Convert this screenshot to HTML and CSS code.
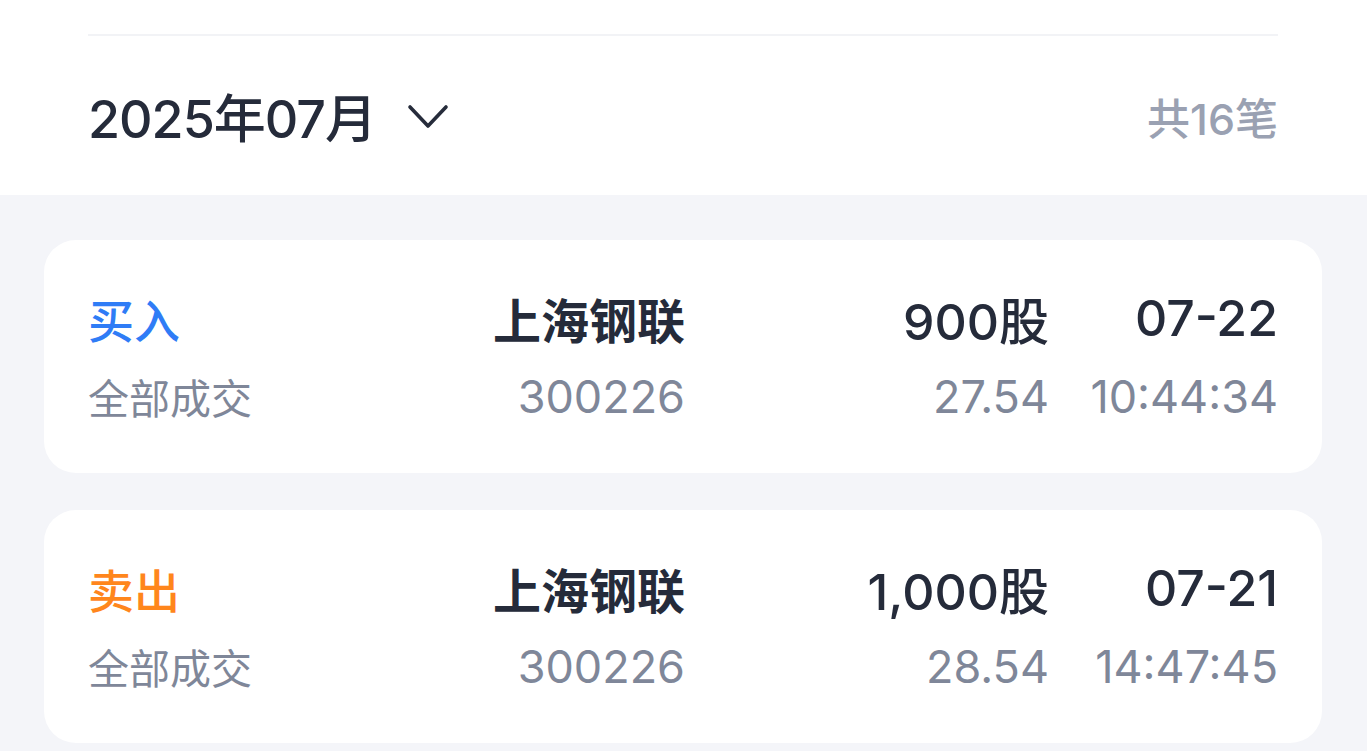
FILE: index.html
```html
<!DOCTYPE html>
<html>
<head>
    <meta charset="utf-8">
    <link rel="stylesheet" href="styles.css">
</head>
<body>
    <div class="header">
        <div class="divider"></div>
        <div class="monthBar">
            <div class="monthPicker">
                <span class="monthText">2025年07月</span>
                <svg class="chevron" width="44" height="28" viewBox="0 0 44 28">
                    <path d="M4 5 L22 24 L40 5" fill="none" stroke="#262c3b" stroke-width="3.6" stroke-linecap="round" stroke-linejoin="round"/>
                </svg>
            </div>
            <span class="countText">共16笔</span>
        </div>
    </div>

    <div class="list">
        <!-- each card is one order -->
        <div class="orderCard">
            <div class="cell typeBuy">买入</div>
            <div class="cell name">上海钢联</div>
            <div class="cell main">900股</div>
            <div class="cell main">07-22</div>
            <div class="cell sub left">全部成交</div>
            <div class="cell sub">300226</div>
            <div class="cell sub">27.54</div>
            <div class="cell sub">10:44:34</div>
        </div>
        <div class="orderCard">
            <div class="cell typeSell">卖出</div>
            <div class="cell name">上海钢联</div>
            <div class="cell main">1,000股</div>
            <div class="cell main">07-21</div>
            <div class="cell sub left">全部成交</div>
            <div class="cell sub">300226</div>
            <div class="cell sub">28.54</div>
            <div class="cell sub">14:47:45</div>
        </div>
    </div>
</body>
</html>
```

FILE: styles.css
```css
body {
    margin: 0;
    background-color: #f4f5f9;
    font-family: Inter, "Noto Sans CJK SC", sans-serif;
    color: #252b3a;
}

.header {
    background-color: #ffffff;
    height: 195px;
    padding: 0 89px 0 88px;
}

.divider {
    padding-top: 34px;
    border-bottom: 2px solid #f2f3f6;
}

.monthBar {
    display: flex;
    align-items: center;
    justify-content: space-between;
    height: 159px;
}

.monthPicker {
    display: flex;
    align-items: center;
    gap: 30px;
}

.monthText {
    font-size: 52px;
    font-weight: 500;
    letter-spacing: -1px;
}

.countText {
    font-size: 43px;
    font-weight: 500;
    color: #9aa1b2;
}

.list {
    padding: 45px 45px 0 44px;
    display: flex;
    flex-direction: column;
    gap: 37px;
}

.orderCard {
    background-color: #ffffff;
    border-radius: 32px;
    height: 233px;
    box-sizing: border-box;
    padding: 52px 44px 0 44px;
    display: grid;
    grid-template-columns: 200px 397px 364px 229px;
    grid-template-rows: 52px 52px;
    row-gap: 26px;
    align-items: center;
}

.cell {
    text-align: right;
    white-space: nowrap;
}

.typeBuy, .typeSell {
    text-align: left;
    font-size: 46px;
    font-weight: 500;
}

.typeBuy {
    color: #2f7cf6;
}

.typeSell {
    color: #ff861c;
}

.name {
    font-size: 48px;
    font-weight: 600;
}

.main {
    font-size: 50px;
    font-weight: 500;
}

.sub {
    font-size: 45px;
    color: #7f8799;
}

.sub.left {
    text-align: left;
    font-size: 41px;
}
```
